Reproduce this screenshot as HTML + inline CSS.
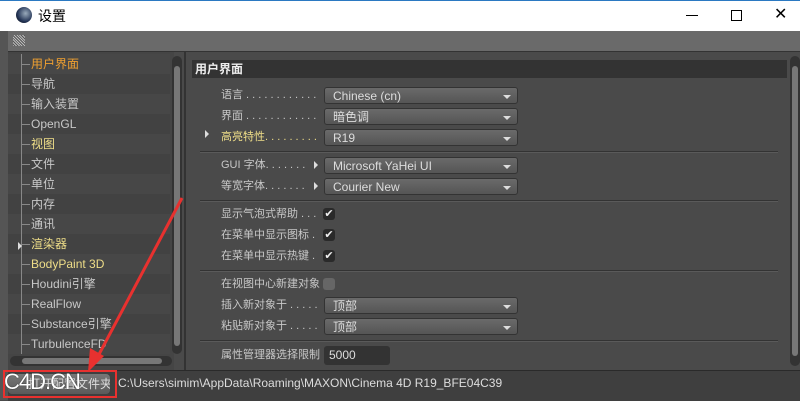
<!DOCTYPE html><html><head><style>
body{margin:0;width:800px;height:400px;overflow:hidden;background:#4a4a4a;font-family:"Liberation Sans","Microsoft YaHei","Noto Sans CJK SC",sans-serif;font-size:12px;position:relative}
.a{position:absolute}
.t{color:#c8c8c8;white-space:nowrap}
.row{position:absolute;left:8px;width:162px;height:20px;line-height:20px;color:#c8c8c8;padding-left:23px;box-sizing:border-box;white-space:nowrap;overflow:hidden}
.row:before{content:"";position:absolute;left:14px;top:10px;width:8px;border-top:1px solid #888}
.dd{position:absolute;left:324px;width:194px;height:17px;background:linear-gradient(#6a6a6a,#555);border:1px solid #333;border-radius:3px;color:#ddd;line-height:17px;padding-left:8px;box-sizing:border-box}
.dd:after{content:"";position:absolute;right:6px;top:7px;border:4px solid transparent;border-top:4px solid #ddd;border-bottom:0}
.lb{position:absolute;left:221px;color:#c8c8c8;white-space:nowrap;line-height:17px;font-size:11px}
.sep{position:absolute;left:200px;width:578px;border-top:1px solid #333;border-bottom:1px solid #5a5a5a}
.cb{position:absolute;left:323px;width:12px;height:12px;background:#2a2a2a;border-radius:3px;color:#eee;font-size:11px;line-height:12px;text-align:center}
</style></head><body>
<div class="a" style="left:0;top:0;width:800px;height:31px;background:#fff;border-top:1px solid #2b79c2;box-sizing:border-box"></div>
<div class="a" style="left:0;top:31px;width:8px;height:369px;background:#555"></div>
<div class="a" style="left:16px;top:7px;width:16px;height:16px;border-radius:50%;background:radial-gradient(circle at 60% 40%,#9ab 0,#235 60%,#111 100%)"></div>
<div class="a" style="left:38px;top:6px;font-size:14px;color:#000">设置</div>
<div class="a" style="left:686px;top:15px;width:12px;border-top:1px solid #000"></div>
<div class="a" style="left:731px;top:10px;width:9px;height:9px;border:1px solid #000"></div>
<div class="a" style="left:774px;top:4px;font-size:16px;color:#000">✕</div>
<div class="a" style="left:8px;top:31px;width:792px;height:20px;background:#6a6a6a;border-bottom:1px solid #333"></div>
<div class="a" style="left:13px;top:35px;width:12px;height:11px;background:repeating-linear-gradient(45deg,#bbb 0 1px,#555 1px 2px)"></div>
<div class="a" style="left:8px;top:52px;width:166px;height:318px;background:#454545"></div>
<div class="row" style="top:54px;background:#474747;color:#f0a030">用户界面</div>
<div class="row" style="top:74px;background:#424242">导航</div>
<div class="row" style="top:94px;background:#474747">输入装置</div>
<div class="row" style="top:114px;background:#424242">OpenGL</div>
<div class="row" style="top:134px;background:#474747;color:#eedd88">视图</div>
<div class="row" style="top:154px;background:#424242">文件</div>
<div class="row" style="top:174px;background:#474747">单位</div>
<div class="row" style="top:194px;background:#424242">内存</div>
<div class="row" style="top:214px;background:#474747">通讯</div>
<div class="row" style="top:234px;background:#424242;color:#eedd88">渲染器</div>
<div class="row" style="top:254px;background:#474747;color:#eedd88">BodyPaint 3D</div>
<div class="row" style="top:274px;background:#424242">Houdini引擎</div>
<div class="row" style="top:294px;background:#474747">RealFlow</div>
<div class="row" style="top:314px;background:#424242">Substance引擎</div>
<div class="row" style="top:334px;background:#474747">TurbulenceFD</div>
<div class="a" style="left:21px;top:54px;height:300px;border-left:1px solid #888"></div>
<div class="a" style="left:18px;top:242px;border:4px solid transparent;border-left:4px solid #ddd;border-right:0"></div>
<div class="a" style="left:172px;top:56px;width:10px;height:298px;background:#333;border-radius:5px"></div>
<div class="a" style="left:174px;top:66px;width:6px;height:280px;background:#777;border-radius:3px"></div>
<div class="a" style="left:10px;top:356px;width:162px;height:10px;background:#333;border-radius:5px"></div>
<div class="a" style="left:22px;top:358px;width:140px;height:6px;background:#777;border-radius:3px"></div>
<div class="a" style="left:184px;top:52px;width:2px;height:318px;background:#333"></div>
<div class="a" style="left:192px;top:60px;width:595px;height:18px;background:#333;color:#eee;font-weight:bold;line-height:18px;padding-left:3px;box-sizing:border-box">用户界面</div>
<div class="a" style="left:790px;top:56px;width:10px;height:310px;background:#333;border-radius:5px"></div>
<div class="a" style="left:792px;top:66px;width:6px;height:290px;background:#777;border-radius:3px"></div>
<div class="lb" style="top:87px">语言 . . . . . . . . . . . .</div><div class="dd" style="top:87px">Chinese (cn)</div>
<div class="lb" style="top:108px">界面 . . . . . . . . . . . .</div><div class="dd" style="top:108px">暗色调</div>
<div class="a" style="left:205px;top:130px;border:4px solid transparent;border-left:4px solid #ddd;border-right:0"></div>
<div class="lb" style="top:129px;color:#eedd88">高亮特性. . . . . . . . .</div><div class="dd" style="top:129px">R19</div>
<div class="sep" style="top:151px"></div>
<div class="lb" style="top:157px">GUI 字体. . . . . . .</div><div class="dd" style="top:157px">Microsoft YaHei UI</div>
<div class="lb" style="top:178px">等宽字体. . . . . . .</div><div class="dd" style="top:178px">Courier New</div>
<div class="a" style="left:314px;top:161px;border:4px solid transparent;border-left:4px solid #ddd;border-right:0"></div>
<div class="a" style="left:314px;top:182px;border:4px solid transparent;border-left:4px solid #ddd;border-right:0"></div>
<div class="sep" style="top:200px"></div>
<div class="lb" style="top:206px">显示气泡式帮助 . . .</div><div class="cb" style="top:208px">✔</div>
<div class="lb" style="top:227px">在菜单中显示图标 .</div><div class="cb" style="top:229px">✔</div>
<div class="lb" style="top:248px">在菜单中显示热键 .</div><div class="cb" style="top:250px">✔</div>
<div class="sep" style="top:270px"></div>
<div class="lb" style="top:276px">在视图中心新建对象</div><div class="cb" style="top:278px;background:#666"></div>
<div class="lb" style="top:297px">插入新对象于 . . . . .</div><div class="dd" style="top:297px">顶部</div>
<div class="lb" style="top:318px">粘贴新对象于 . . . . .</div><div class="dd" style="top:318px">顶部</div>
<div class="sep" style="top:340px"></div>
<div class="lb" style="top:347px">属性管理器选择限制</div>
<div class="a" style="left:324px;top:346px;width:66px;height:19px;background:#333;border-radius:3px;color:#ddd;line-height:19px;padding-left:5px;box-sizing:border-box">5000</div>
<div class="a" style="left:8px;top:370px;width:792px;height:30px;background:#3f3f3f;border-top:1px solid #2a2a2a"></div>
<div class="a" style="left:8px;top:374px;width:102px;height:20px;background:linear-gradient(#777,#5a5a5a);border-radius:4px;color:#ddd;line-height:20px;padding-left:20px;box-sizing:border-box;white-space:nowrap;overflow:hidden">打开配置文件夹</div>
<div class="a t" style="left:118px;top:376px;color:#ddd">C:\Users\simim\AppData\Roaming\MAXON\Cinema 4D R19_BFE04C39</div>
<div class="a" style="left:3px;top:370px;width:110px;height:24px;border:2px solid #e8312f"></div>
<div class="a" style="left:4px;top:369px;font-size:22px;color:#fff;text-shadow:0 0 1px #000;letter-spacing:-1px">C4D.CN</div>
<svg class="a" style="left:0;top:0" width="800" height="400"><line x1="182" y1="198" x2="96" y2="360" stroke="#e8312f" stroke-width="3"/><polygon points="88,372 90,348 104,356" fill="#e8312f"/></svg>
</body></html>
